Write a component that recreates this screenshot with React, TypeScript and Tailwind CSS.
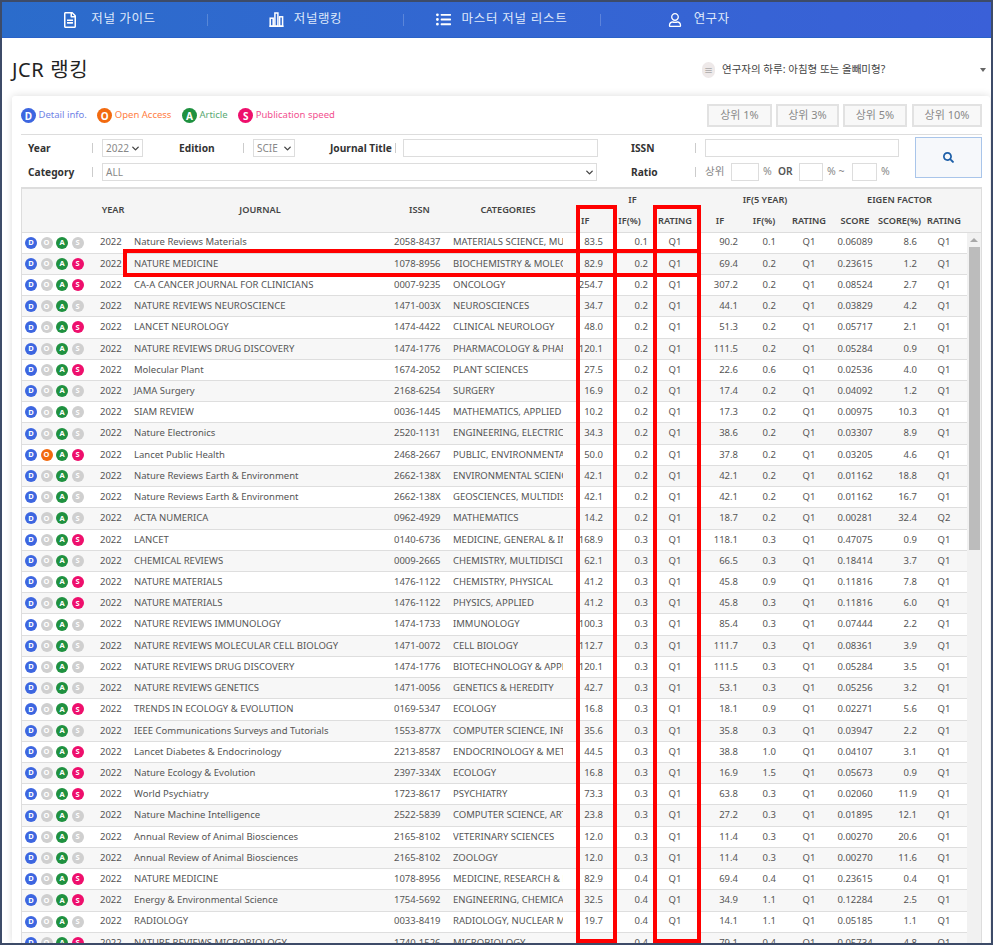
import React from "react";
import { FaRegFileAlt, FaListUl, FaRegUser, FaSearch } from "react-icons/fa";
import { ChevronDown } from "lucide-react";

const FONT = "font-['Noto_Sans','Noto_Sans_CJK_KR',sans-serif]";
const COLS = "grid grid-cols-[74px_34px_260px_59px_118px_40px_45px_46px_44px_44px_46px_46px_43px_46px]";

const RAW = `1|Nature Reviews Materials|2058-8437|MATERIALS SCIENCE, MULTIDISCIPLINARY|83.5|0.1|90.2|0.1|0.06089|8.6|Q1|0
1|NATURE MEDICINE|1078-8956|BIOCHEMISTRY & MOLECULAR BIOLOGY|82.9|0.2|69.4|0.2|0.23615|1.2|Q1|1
1|CA-A CANCER JOURNAL FOR CLINICIANS|0007-9235|ONCOLOGY|254.7|0.2|307.2|0.2|0.08524|2.7|Q1|1
1|NATURE REVIEWS NEUROSCIENCE|1471-003X|NEUROSCIENCES|34.7|0.2|44.1|0.2|0.03829|4.2|Q1|0
1|LANCET NEUROLOGY|1474-4422|CLINICAL NEUROLOGY|48.0|0.2|51.3|0.2|0.05717|2.1|Q1|1
1|NATURE REVIEWS DRUG DISCOVERY|1474-1776|PHARMACOLOGY & PHARMACY|120.1|0.2|111.5|0.2|0.05284|0.9|Q1|0
1|Molecular Plant|1674-2052|PLANT SCIENCES|27.5|0.2|22.6|0.6|0.02536|4.0|Q1|1
1|JAMA Surgery|2168-6254|SURGERY|16.9|0.2|17.4|0.2|0.04092|1.2|Q1|0
1|SIAM REVIEW|0036-1445|MATHEMATICS, APPLIED|10.2|0.2|17.3|0.2|0.00975|10.3|Q1|0
1|Nature Electronics|2520-1131|ENGINEERING, ELECTRICAL & ELECTRONIC|34.3|0.2|38.6|0.2|0.03307|8.9|Q1|0
2|Lancet Public Health|2468-2667|PUBLIC, ENVIRONMENTAL & OCCUPATIONAL|50.0|0.2|37.8|0.2|0.03205|4.6|Q1|1
1|Nature Reviews Earth & Environment|2662-138X|ENVIRONMENTAL SCIENCES|42.1|0.2|42.1|0.2|0.01162|18.8|Q1|0
1|Nature Reviews Earth & Environment|2662-138X|GEOSCIENCES, MULTIDISCIPLINARY|42.1|0.2|42.1|0.2|0.01162|16.7|Q1|0
1|ACTA NUMERICA|0962-4929|MATHEMATICS|14.2|0.2|18.7|0.2|0.00281|32.4|Q2|0
1|LANCET|0140-6736|MEDICINE, GENERAL & INTERNAL|168.9|0.3|118.1|0.3|0.47075|0.9|Q1|1
1|CHEMICAL REVIEWS|0009-2665|CHEMISTRY, MULTIDISCIPLINARY|62.1|0.3|66.5|0.3|0.18414|3.7|Q1|0
1|NATURE MATERIALS|1476-1122|CHEMISTRY, PHYSICAL|41.2|0.3|45.8|0.9|0.11816|7.8|Q1|1
1|NATURE MATERIALS|1476-1122|PHYSICS, APPLIED|41.2|0.3|45.8|0.3|0.11816|6.0|Q1|1
1|NATURE REVIEWS IMMUNOLOGY|1474-1733|IMMUNOLOGY|100.3|0.3|85.4|0.3|0.07444|2.2|Q1|0
1|NATURE REVIEWS MOLECULAR CELL BIOLOGY|1471-0072|CELL BIOLOGY|112.7|0.3|111.7|0.3|0.08361|3.9|Q1|0
1|NATURE REVIEWS DRUG DISCOVERY|1474-1776|BIOTECHNOLOGY & APPLIED MICROBIOLOGY|120.1|0.3|111.5|0.3|0.05284|3.5|Q1|0
1|NATURE REVIEWS GENETICS|1471-0056|GENETICS & HEREDITY|42.7|0.3|53.1|0.3|0.05256|3.2|Q1|0
1|TRENDS IN ECOLOGY & EVOLUTION|0169-5347|ECOLOGY|16.8|0.3|18.1|0.9|0.02271|5.6|Q1|1
1|IEEE Communications Surveys and Tutorials|1553-877X|COMPUTER SCIENCE, INFORMATION SYSTEMS|35.6|0.3|35.8|0.3|0.03947|2.2|Q1|0
1|Lancet Diabetes & Endocrinology|2213-8587|ENDOCRINOLOGY & METABOLISM|44.5|0.3|38.8|1.0|0.04107|3.1|Q1|1
1|Nature Ecology & Evolution|2397-334X|ECOLOGY|16.8|0.3|16.9|1.5|0.05673|0.9|Q1|1
1|World Psychiatry|1723-8617|PSYCHIATRY|73.3|0.3|63.8|0.3|0.02060|11.9|Q1|1
1|Nature Machine Intelligence|2522-5839|COMPUTER SCIENCE, ARTIFICIAL INTELLIGENCE|23.8|0.3|27.2|0.3|0.01895|12.1|Q1|0
1|Annual Review of Animal Biosciences|2165-8102|VETERINARY SCIENCES|12.0|0.3|11.4|0.3|0.00270|20.6|Q1|0
1|Annual Review of Animal Biosciences|2165-8102|ZOOLOGY|12.0|0.3|11.4|0.3|0.00270|11.6|Q1|0
1|NATURE MEDICINE|1078-8956|MEDICINE, RESEARCH & EXPERIMENTAL|82.9|0.4|69.4|0.4|0.23615|0.4|Q1|1
1|Energy & Environmental Science|1754-5692|ENGINEERING, CHEMICAL|32.5|0.4|34.9|1.1|0.12284|2.5|Q1|1
1|RADIOLOGY|0033-8419|RADIOLOGY, NUCLEAR MEDICINE|19.7|0.4|14.1|1.1|0.05185|1.1|Q1|0
1|NATURE REVIEWS MICROBIOLOGY|1740-1526|MICROBIOLOGY|88.1|0.4|79.1|0.4|0.05734|4.8|Q1|1`;

const ROWS = RAW.split("\n").map((l) => l.split("|"));

function Dot({ l, c }: { l: string; c: string }) {
  return (
    <span className={`w-3 h-3 rounded-full flex items-center justify-center text-white text-[7.5px] font-bold leading-none ${c}`}>
      {l}
    </span>
  );
}

function LegendDot({ l, c }: { l: string; c: string }) {
  return (
    <span className={`w-[15px] h-[15px] rounded-full flex items-center justify-center text-white text-[10px] font-bold leading-none ${c}`}>
      {l}
    </span>
  );
}

function BarsIcon() {
  return (
    <svg width="15" height="15" viewBox="0 0 15 15" fill="none" stroke="white" strokeWidth="1.5">
      <path d="M.5 14.2h14" />
      <rect x="1.2" y="6.2" width="3" height="8" />
      <rect x="5.9" y="1" width="3" height="13.2" />
      <rect x="10.6" y="4.8" width="3" height="9.4" />
    </svg>
  );
}

function Sep() {
  return <div className="w-px h-[12px] bg-white/20 shrink-0" />;
}

function VBar() {
  return <div className="w-px h-[10px] bg-[#ccc] shrink-0" />;
}

function Label({ w, pl, children }: { w: string; pl: string; children: React.ReactNode }) {
  return <div className={`${w} ${pl} pt-[2px] shrink-0 text-[10.2px] font-bold text-[#333] whitespace-nowrap`}>{children}</div>;
}

const FIELD = "h-[18px] border border-[#ddd] bg-white text-[10px] text-[#888] shrink-0";

function SelectBox({ w, ml, text }: { w: string; ml: string; text: string }) {
  return (
    <div className={`${FIELD} ${w} ${ml} flex items-center justify-between pl-[3px] pr-[1px]`}>
      <span>{text}</span>
      <ChevronDown size={11} strokeWidth={3} className="text-[#444]" />
    </div>
  );
}

function PageTop() {
  return (
    <>
      <nav className="h-[36px] flex items-center pl-[9px] bg-gradient-to-r from-[#2b6ccb] to-[#3a60d8] border-b border-[#2a62c8] text-[#dfe8fa] text-[12.5px] tracking-[0.6px] shrink-0">
        <div className="w-[196px] flex items-center justify-center gap-[13px]">
          <FaRegFileAlt className="text-white text-[16px]" />
          <span>저널 가이드</span>
        </div>
        <Sep />
        <div className="w-[195px] flex items-center justify-center gap-[10px]">
          <BarsIcon />
          <span>저널랭킹</span>
        </div>
        <Sep />
        <div className="w-[196px] flex items-center justify-center gap-[10px] tracking-[0.75px]">
          <FaListUl className="text-white text-[15px]" />
          <span>마스터 저널 리스트</span>
        </div>
        <Sep />
        <div className="w-[195px] flex items-center justify-center gap-[12px] tracking-[0.3px]">
          <FaRegUser className="text-white text-[14px]" />
          <span>연구자</span>
        </div>
      </nav>
      <div className="h-[58px] flex items-center pl-[10px] pt-[6px] shrink-0">
        <h1 className="text-[20px] text-[#222] font-normal tracking-[0.6px] w-[690px]">JCR 랭킹</h1>
        <span className="w-[13px] h-[16px] rounded-full bg-[#eee9e9] flex items-center justify-center text-[#888] text-[9px] leading-none">≡</span>
        <span className="ml-[7px] w-[258px] text-[10.5px] text-[#444]">연구자의 하루: 아침형 또는 올빼미형?</span>
        <span className="w-0 h-0 border-x-[3px] border-x-transparent border-t-[4px] border-t-[#666]" />
      </div>
    </>
  );
}

function Legend() {
  const items: [string, string, string, string][] = [
    ["D", "bg-[#3d66e0]", "text-[#6f83e6]", "Detail info."],
    ["O", "bg-[#f26a0f]", "text-[#ff7d42]", "Open Access"],
    ["A", "bg-[#1f9140]", "text-[#5aa873]", "Article"],
    ["S", "bg-[#ee0f6c]", "text-[#f2508f]", "Publication speed"],
  ];
  const btn = "h-[23px] border-2 border-[#e2e2e2] bg-[#f8f8f8] flex items-center justify-center text-[11px] text-[#888]";
  return (
    <div className="h-[23px] flex items-center justify-between">
      <div className="flex items-center gap-[10.5px]">
        {items.map(([l, c, t, s]) => (
          <div key={l} className="flex items-center gap-[2.5px]">
            <LegendDot l={l} c={c} />
            <span className={`text-[9.5px] ${t}`}>{s}</span>
          </div>
        ))}
      </div>
      <div className="flex gap-[4px]">
        <div className={`${btn} w-[65px]`}>상위 1%</div>
        <div className={`${btn} w-[63px]`}>상위 3%</div>
        <div className={`${btn} w-[64px] mr-[1px]`}>상위 5%</div>
        <div className={`${btn} w-[70px]`}>상위 10%</div>
      </div>
    </div>
  );
}

function Filters() {
  return (
    <div className="mt-[7px] border-t border-[#ddd] flex justify-between">
      <div className="pt-[4px] flex flex-col gap-[6px]">
        <div className="h-[18px] flex items-center">
          <Label w="w-[71px]" pl="pl-[7px]">Year</Label>
          <VBar />
          <SelectBox w="w-[41px]" ml="ml-[9px]" text="2022" />
          <Label w="w-[100px]" pl="pl-[36px]">Edition</Label>
          <VBar />
          <SelectBox w="w-[42px]" ml="ml-[9px]" text="SCIE" />
          <Label w="w-[100px]" pl="pl-[35px]">Journal Title</Label>
          <VBar />
          <input readOnly className={`${FIELD} w-[195px] ml-[7px]`} />
          <Label w="w-[97px]" pl="pl-[33px]">ISSN</Label>
          <VBar />
          <input readOnly className={`${FIELD} w-[194px] ml-[9px]`} />
        </div>
        <div className="h-[18px] flex items-center">
          <Label w="w-[71px]" pl="pl-[7px]">Category</Label>
          <VBar />
          <SelectBox w="w-[495px]" ml="ml-[9px]" text="ALL" />
          <Label w="w-[98px]" pl="pl-[34px]">Ratio</Label>
          <VBar />
          <span className="ml-[9px] w-[26px] text-[10.5px] text-[#888] shrink-0">상위</span>
          <input readOnly className={`${FIELD} w-[28px]`} />
          <span className="ml-[4px] w-[15px] text-[10.5px] text-[#888] shrink-0">%</span>
          <span className="w-[21px] text-[10.2px] font-semibold text-[#555] shrink-0">OR</span>
          <input readOnly className={`${FIELD} w-[24px]`} />
          <span className="ml-[4px] w-[25px] text-[10.5px] text-[#888] shrink-0">% ~</span>
          <input readOnly className={`${FIELD} w-[25px]`} />
          <span className="ml-[4px] text-[10.5px] text-[#888] shrink-0">%</span>
        </div>
      </div>
      <div className="mt-[2px] w-[67px] h-[41px] border border-[#a9c5ea] bg-[#f6f8fb] flex items-center justify-center">
        <FaSearch className="text-[#1d5fa8] text-[11px]" />
      </div>
    </div>
  );
}

function Header() {
  const th = "flex items-center justify-center text-[9.2px] font-semibold text-[#444] h-[21px]";
  const th2 = "flex items-center justify-center text-[9.2px] font-semibold text-[#444] row-span-2";
  return (
    <div className={`${COLS} bg-[#f5f5f5] border-b border-[#ddd] h-[43.5px]`}>
      <div className={th2} />
      <div className={th2}>YEAR</div>
      <div className={th2}>JOURNAL</div>
      <div className={th2}>ISSN</div>
      <div className={th2}>CATEGORIES</div>
      <div className={`${th} col-span-3`}>IF</div>
      <div className={`${th} col-span-3`}>IF(5 YEAR)</div>
      <div className={`${th} col-span-3`}>EIGEN FACTOR</div>
      <div className={`${th} !justify-start pl-[14px]`}>IF</div>
      <div className={th}>IF(%)</div>
      <div className={th}>RATING</div>
      <div className={th}>IF</div>
      <div className={th}>IF(%)</div>
      <div className={th}>RATING</div>
      <div className={th}>SCORE</div>
      <div className={th}>SCORE(%)</div>
      <div className={th}>RATING</div>
    </div>
  );
}

function Row({ r, even }: { r: string[]; even: boolean }) {
  const [o, journal, issn, cat, a, b, c, d, e, f, q, s] = r;
  const right = "text-right pr-1";
  return (
    <div className={`${COLS} h-[21.22px] items-center border-b border-[#dedede] text-[9.5px] text-[#555] whitespace-nowrap ${even ? "bg-[#f7f7f7]" : "bg-white"}`}>
      <div className="flex gap-[3.5px] pl-[3px]">
        <Dot l="D" c="bg-[#3d66e0]" />
        <Dot l="O" c={o === "2" ? "bg-[#f26a0f]" : "bg-[#cfcfcf]"} />
        <Dot l="A" c="bg-[#1f9140]" />
        <Dot l="S" c={s === "1" ? "bg-[#ee0f6c]" : "bg-[#cfcfcf]"} />
      </div>
      <div className="pl-1">2022</div>
      <div className="pl-1 overflow-hidden">{journal}</div>
      <div className="pl-1">{issn}</div>
      <div className="pl-1 pr-1"><div className="overflow-hidden">{cat}</div></div>
      <div className={right}>{a}</div>
      <div className={right}>{b}</div>
      <div className="text-center">Q1</div>
      <div className={right}>{c}</div>
      <div className="text-right pr-[10px]">{d}</div>
      <div className="text-center">Q1</div>
      <div className="text-center">{e}</div>
      <div className={right}>{f}</div>
      <div className="text-center">{q}</div>
    </div>
  );
}

function Scrollbar() {
  return (
    <div className="w-[14px] bg-[#f1f1f1] shrink-0 flex flex-col items-center">
      <div className="h-[14px] flex items-center justify-center">
        <span className="w-0 h-0 border-x-[4px] border-x-transparent border-b-[4px] border-b-[#a8a8a8]" />
      </div>
      <div className="w-[11px] h-[303px] bg-[#bcbcbc]" />
    </div>
  );
}

export default function App() {
  return (
    <div className={`${FONT} relative w-[993px] h-[945px] border-2 border-[#3d4b68] overflow-hidden bg-white flex flex-col`}>
      <PageTop />
      <section className="ml-[10px] mr-[1px] flex-1 min-h-0 bg-white rounded-[3px] shadow-[0_0_8px_rgba(0,0,0,0.14)] pt-[8px] pl-[9px] pr-[8px]">
        <Legend />
        <Filters />
        <div className="mt-[6px] border-x border-t-2 border-[#ddd]">
          <Header />
          <div className="flex">
            <div className="w-[945px] shrink-0">
              {ROWS.map((r, i) => (
                <Row key={i} r={r} even={i % 2 === 1} />
              ))}
            </div>
            <Scrollbar />
          </div>
        </div>
      </section>
      <div className="absolute left-[574px] top-[203px] w-[41px] h-[738px] border-4 border-[#ff0000]" />
      <div className="absolute left-[651px] top-[203px] w-[48px] h-[738px] border-4 border-[#ff0000]" />
      <div className="absolute left-[121px] top-[247px] w-[578px] h-[28px] border-4 border-[#ff0000]" />
    </div>
  );
}
